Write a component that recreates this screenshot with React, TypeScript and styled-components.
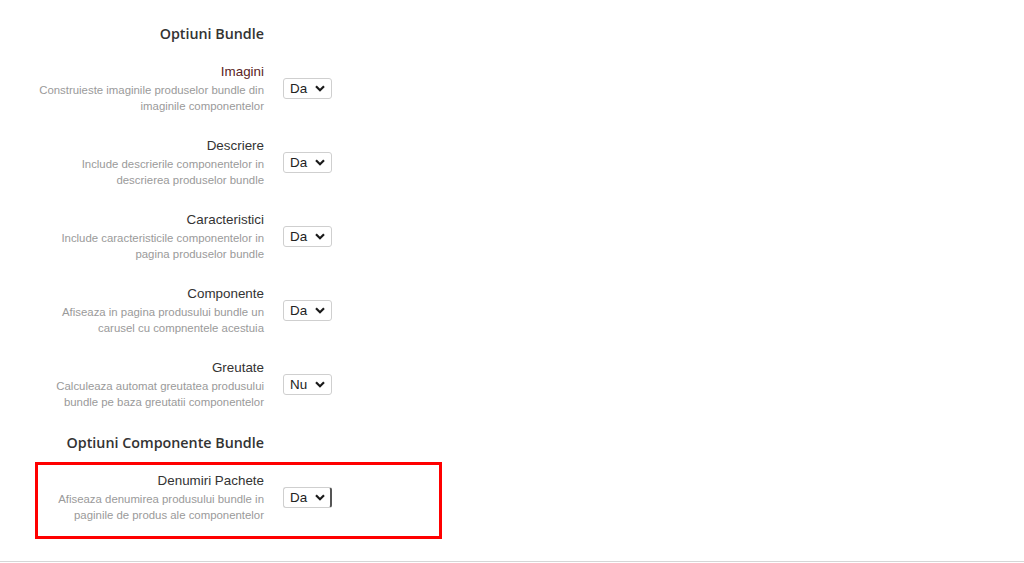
import React from "react"
import styled, { createGlobalStyle } from "styled-components"

const Global = createGlobalStyle`
    html, body {
        margin: 0;
        padding: 0;
        background: #fff;
    }
    body {
        font-family: "Liberation Sans", Arial, sans-serif;
        color: #333;
    }
`

const Page = styled.div`
    min-height: 562px;
    border-bottom: 1px solid #d6d6d6;
    padding-top: 24px;
    box-sizing: border-box;
`

const Section = styled.section`
    display: flex;
    flex-direction: column;
    gap: 24px;
    margin-bottom: 23px;
`

const Heading = styled.h3`
    margin: 0 0 -4px 0;
    width: 264px;
    text-align: right;
    font-family: "Open Sans", sans-serif;
    font-weight: 600;
    font-size: 14.3px;
    line-height: 20px;
    color: #333;
`

const Row = styled.div`
    position: relative;
    display: grid;
    grid-template-columns: 264px auto;
    column-gap: 19px;
    align-items: center;
`

const Info = styled.div`
    text-align: right;
`

const Label = styled.div<{ $hot?: boolean }>`
    font-size: 13.4px;
    line-height: 16px;
    color: ${(p) => (p.$hot ? "#5a2424" : "#333")};
    margin-bottom: 2px;
`

const Desc = styled.div`
    font-size: 11.4px;
    line-height: 16px;
    color: #9a9a9a;
`

const SelectWrap = styled.div`
    position: relative;
    width: 49px;
    height: 21px;
    margin-bottom: 2px;
    svg {
        position: absolute;
        right: 7px;
        top: 7px;
        pointer-events: none;
    }
`

const Select = styled.select<{ $focused?: boolean }>`
    appearance: none;
    -webkit-appearance: none;
    width: 49px;
    height: 21px;
    box-sizing: border-box;
    border: 1px solid #cfcfcf;
    border-right: ${(p) => (p.$focused ? "2px solid #555" : "1px solid #cfcfcf")};
    border-radius: 3px;
    background: #fff;
    padding: 0 0 0 6px;
    font-family: "Liberation Sans", Arial, sans-serif;
    font-size: 13.4px;
    color: #222;
    outline: none;
`

const Highlight = styled.div`
    position: absolute;
    left: 35px;
    top: -11px;
    width: 407px;
    height: 77px;
    box-sizing: border-box;
    border: 3px solid #ff0000;
    pointer-events: none;
`

type Option = {
    label: string
    lines: string[]
    value: "Da" | "Nu"
    hot?: boolean
}

const bundle: Option[] = [
    { label: "Imagini", lines: ["Construieste imaginile produselor bundle din", "imaginile componentelor"], value: "Da", hot: true },
    { label: "Descriere", lines: ["Include descrierile componentelor in", "descrierea produselor bundle"], value: "Da" },
    { label: "Caracteristici", lines: ["Include caracteristicile componentelor in", "pagina produselor bundle"], value: "Da" },
    { label: "Componente", lines: ["Afiseaza in pagina produsului bundle un", "carusel cu compnentele acestuia"], value: "Da" },
    { label: "Greutate", lines: ["Calculeaza automat greutatea produsului", "bundle pe baza greutatii componentelor"], value: "Nu" },
]

const componente: Option[] = [
    { label: "Denumiri Pachete", lines: ["Afiseaza denumirea produsului bundle in", "paginile de produs ale componentelor"], value: "Da" },
]

function Chevron() {
    return (
        <svg width="10" height="7" viewBox="0 0 10 7">
            <path d="M1 1.2 L5 5.2 L9 1.2" fill="none" stroke="#1a1a1a" strokeWidth="2.2" />
        </svg>
    )
}

function OptionRow({ opt, focused, marked }: { opt: Option; focused?: boolean; marked?: boolean }) {
    return (
        <Row>
            <Info>
                <Label $hot={opt.hot}>{opt.label}</Label>
                {opt.lines.map((l, i) => (
                    <Desc key={i}>{l}</Desc>
                ))}
            </Info>
            <SelectWrap>
                <Select defaultValue={opt.value} $focused={focused}>
                    <option value="Da">Da</option>
                    <option value="Nu">Nu</option>
                </Select>
                <Chevron />
            </SelectWrap>
            {marked && <Highlight />}
        </Row>
    )
}

export default function App() {
    return (
        <>
            <Global />
            <Page>
                <Section>
                    <Heading>Optiuni Bundle</Heading>
                    {bundle.map((o) => (
                        <OptionRow key={o.label} opt={o} />
                    ))}
                </Section>
                <Section>
                    <Heading>Optiuni Componente Bundle</Heading>
                    {componente.map((o) => (
                        <OptionRow key={o.label} opt={o} focused marked />
                    ))}
                </Section>
            </Page>
        </>
    )
}
